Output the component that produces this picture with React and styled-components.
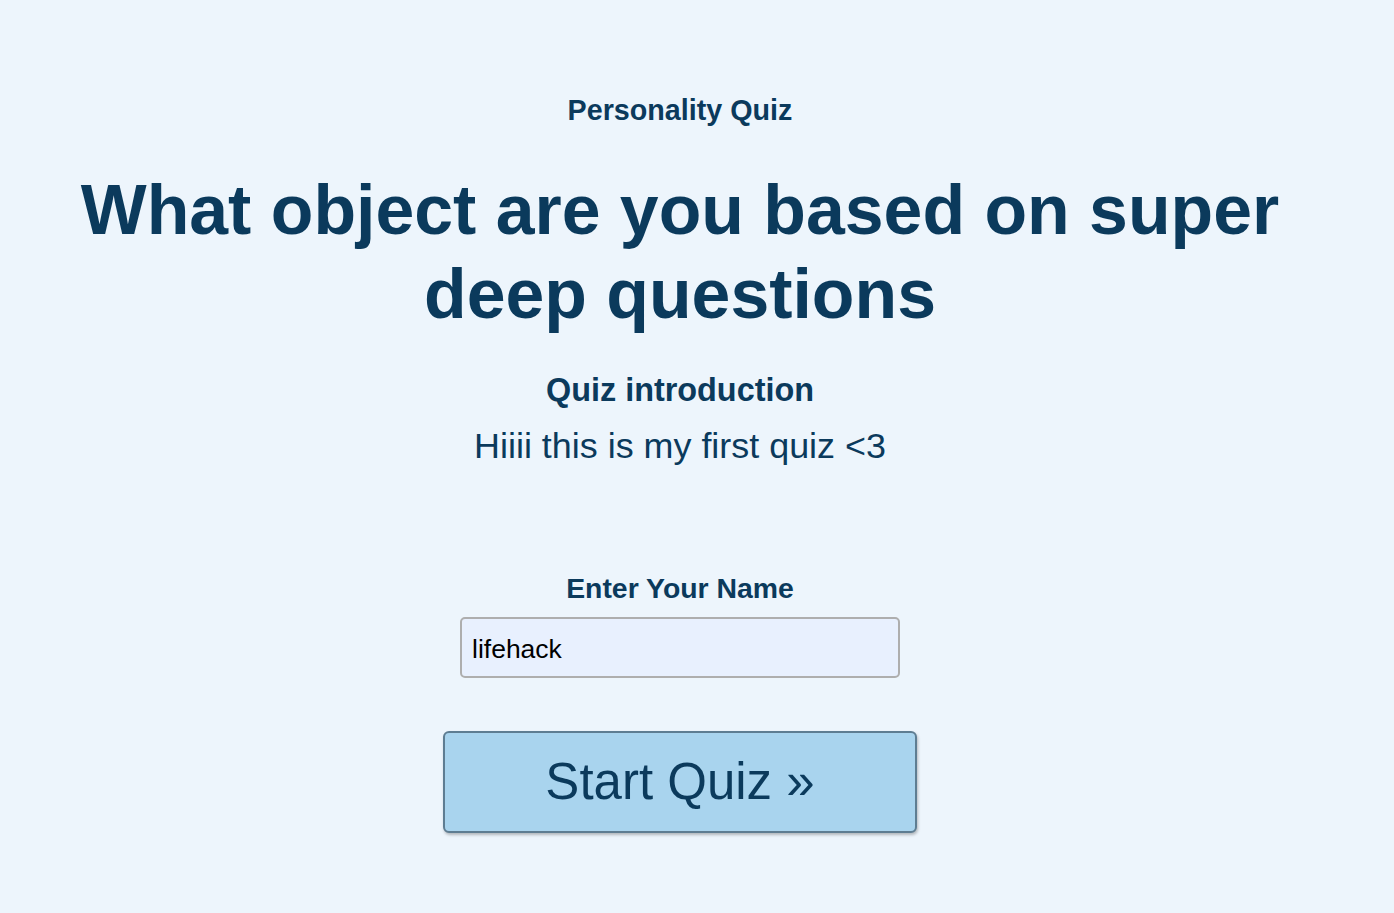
import React, { useState } from 'react'
import styled, { createGlobalStyle } from 'styled-components';

const GlobalStyle = createGlobalStyle`
html, body {
    margin: 0;
    padding: 0;
    background: #edf5fc;
    font-family: "Liberation Sans", Arial, sans-serif;
}
`;

const Page = styled('main')`
width: 1360px;
min-height: 913px;
box-sizing: border-box;
padding-top: 93px;
display: flex;
flex-direction: column;
align-items: center;
text-align: center;
color: #0b3a5c;
`;

const Kicker = styled('div')`
font-size: 28.7px;
line-height: 1.2;
font-weight: 700;
`;

const Title = styled('h1')`
margin: 42px 0 0;
font-size: 69.8px;
line-height: 1.2;
font-weight: 700;
`;

const SectionLabel = styled('h2')`
margin: ${p => p.gap}px 0 0;
font-size: ${p => p.size}px;
line-height: 1.2;
font-weight: 700;
`;

const Intro = styled('p')`
margin: 15px 0 0;
font-size: 35.9px;
line-height: 1.2;
`;

const NameInput = styled('input')`
margin-top: 12px;
width: 440px;
height: 61px;
box-sizing: border-box;
padding: 4px 10px 0;
border: 2px solid #aeaeae;
border-radius: 5px;
background: #e8f0fe;
color: #000;
font-family: "Liberation Sans", Arial, sans-serif;
font-size: 26.5px;
outline: none;
`;

const StartButton = styled('button')`
margin-top: 53px;
width: 474px;
height: 102px;
border: 2px solid #5e7d92;
border-radius: 6px;
background: #a9d4ee;
box-shadow: 1px 2px 3px rgba(0, 0, 0, 0.25);
color: #0b3a5c;
font-family: "Liberation Sans", Arial, sans-serif;
font-size: 51px;
cursor: pointer;
`;

export default function App() {
    const [name, setName] = useState('lifehack')
    return (
        <>
            <GlobalStyle />
            <Page>
                <Kicker>Personality Quiz</Kicker>
                <Title>What object are you based on super deep questions</Title>
                <SectionLabel gap={34} size={32.4}>Quiz introduction</SectionLabel>
                <Intro>Hiiii this is my first quiz &lt;3</Intro>
                <SectionLabel gap={103} size={28.4}>Enter Your Name</SectionLabel>
                <NameInput value={name} onChange={(e) => setName(e.target.value)} />
                <StartButton>Start Quiz »</StartButton>
            </Page>
        </>
    )
}
